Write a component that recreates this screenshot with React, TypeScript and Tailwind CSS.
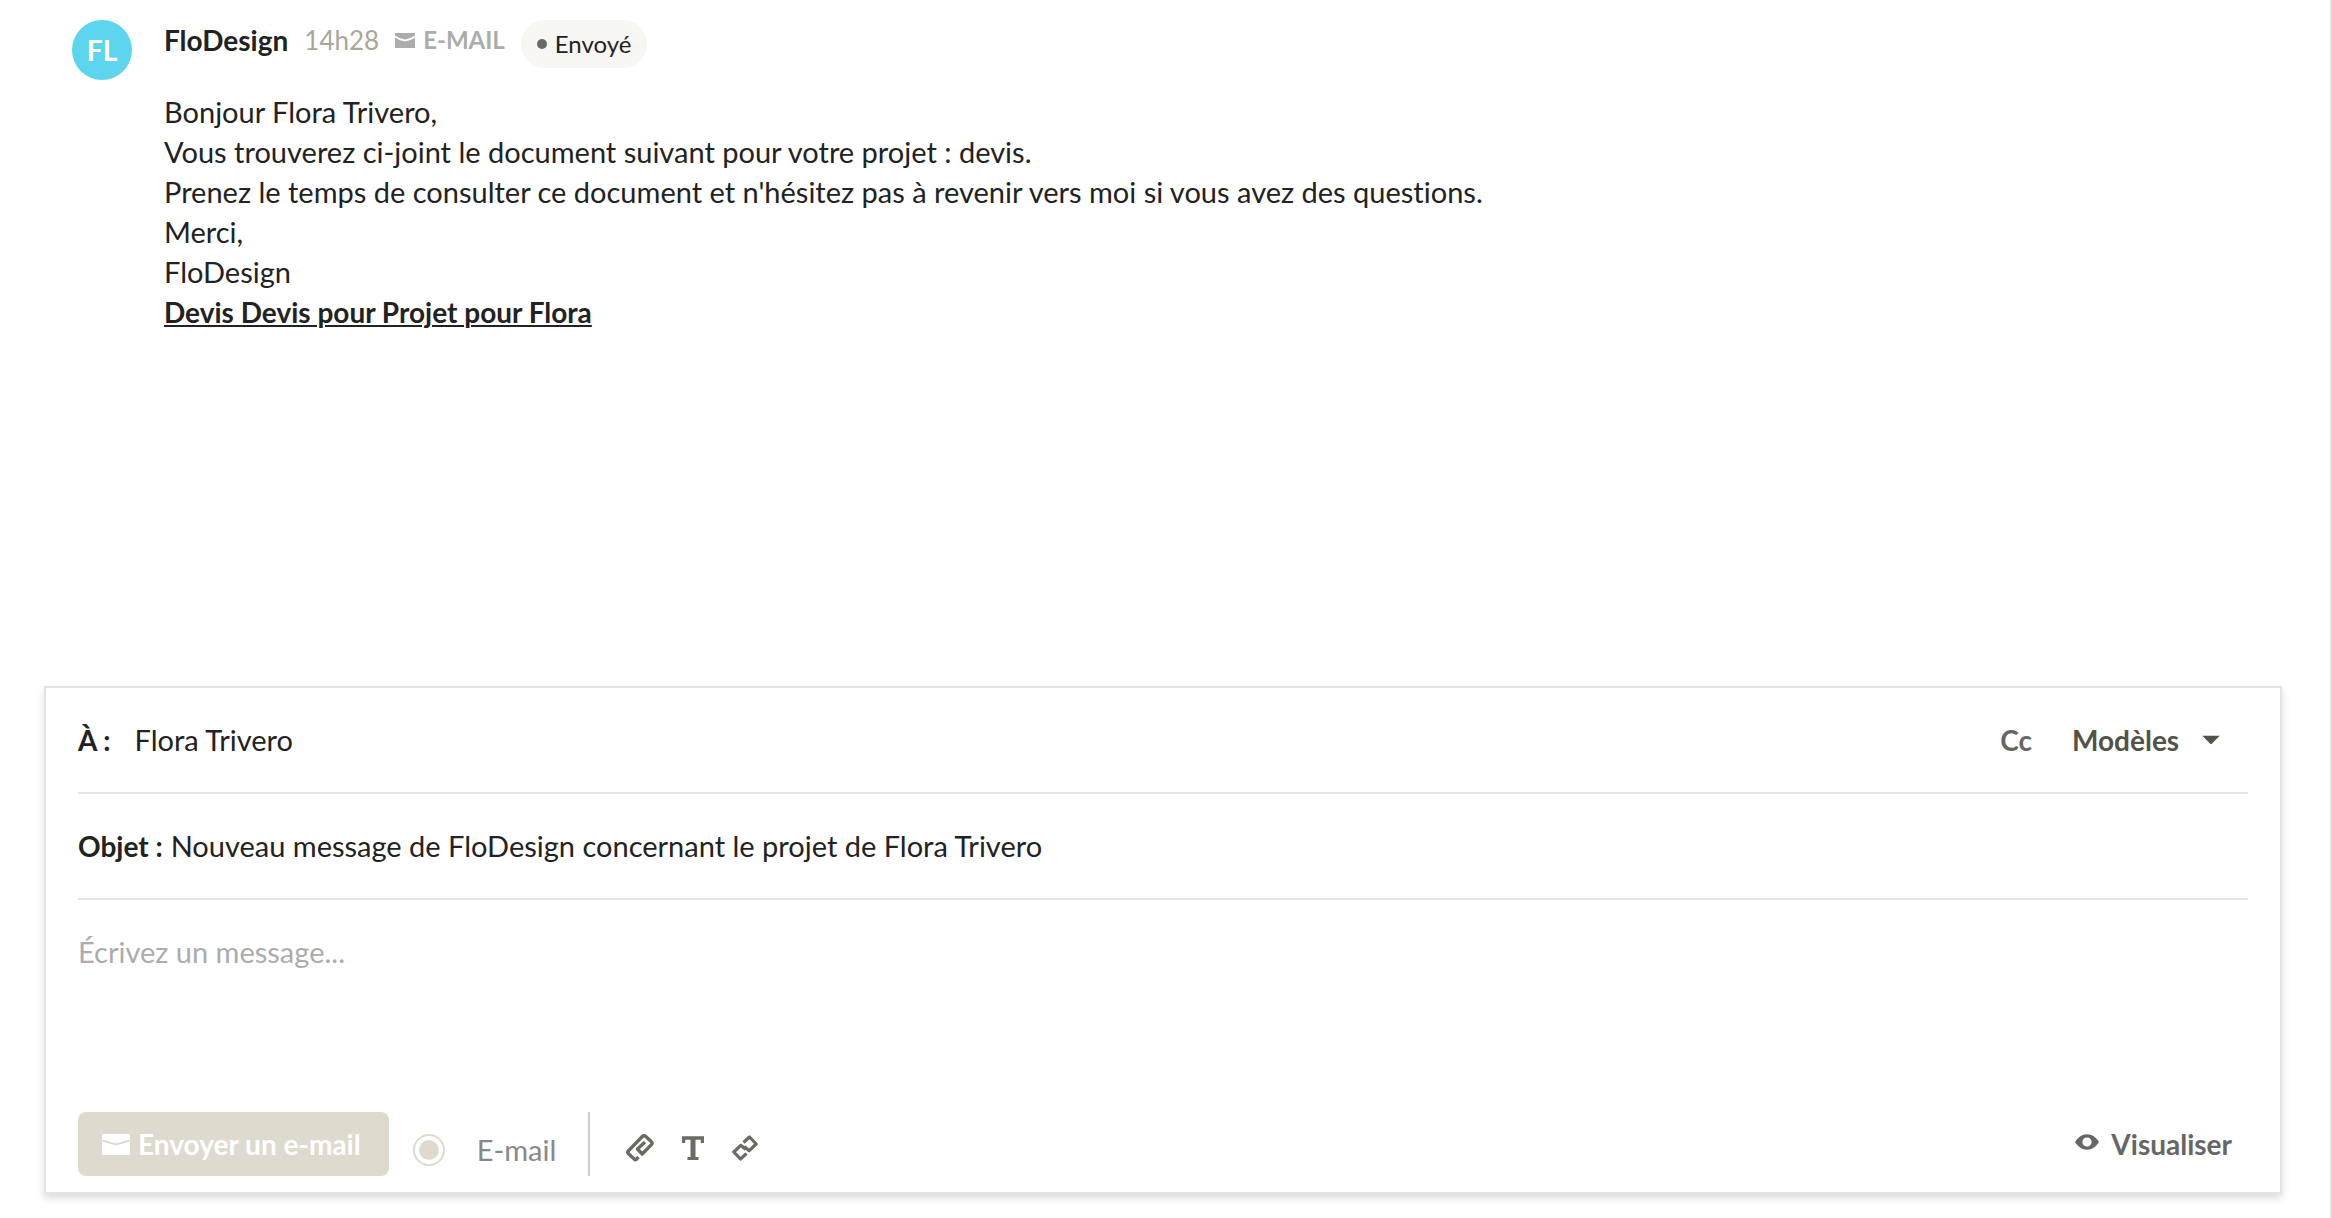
import React, { useState } from 'react';

const messageLines = [
  'Bonjour Flora Trivero,',
  'Vous trouverez ci-joint le document suivant pour votre projet : devis.',
  "Prenez le temps de consulter ce document et n'hésitez pas à revenir vers moi si vous avez des questions.",
  'Merci,',
  'FloDesign'
];

const EnvelopeIcon: React.FC<{ className?: string }> = ({ className }) => (
  <svg viewBox="0 0 28 21" className={className} fill="currentColor" aria-hidden="true">
    <path d="M1.2 0h25.6A1.2 1.2 0 0 1 28 1.2v4.3l-14 4-14-4V1.2A1.2 1.2 0 0 1 1.2 0z" />
    <path d="M0 7.5l14 4 14-4v12.3a1.2 1.2 0 0 1-1.2 1.2H1.2A1.2 1.2 0 0 1 0 19.8z" />
  </svg>
);

const SmallEnvelopeIcon: React.FC<{ className?: string }> = ({ className }) => (
  <svg viewBox="0 0 20 15" className={className} fill="currentColor" aria-hidden="true">
    <path d="M0 0h20v2.6Q15 6.2 10 6.6 5 6.2 0 2.6z" />
    <path d="M0 4.400q5 3.600 10 4 5-.4 10-4V15H0z" />
  </svg>
);

const ClipIcon: React.FC = () => (
  <svg viewBox="0 0 28 28" className="size-7" fill="none" stroke="currentColor" strokeWidth="3.4" strokeLinejoin="round" aria-hidden="true">
    <path d="M12.500 23l-2 2.200q-1 1-2 0L2.500 19.700q-1.500-1.500 0-3L16.300 2.500q1.700-1.700 3.500 0l5.400 5q1.700 1.600 0 3.400l-9 9.100-4.700-5 7.500-7" />
  </svg>
);

const TextIcon: React.FC = () => (
  <svg viewBox="0 0 22 24" className="h-6 w-[22px]" fill="none" stroke="currentColor" aria-hidden="true">
    <path d="M1.500 7V2h19v5" strokeWidth="3.500" />
    <path d="M11 2v20" strokeWidth="5" />
    <path d="M5.500 22.500h11" strokeWidth="3" />
  </svg>
);

const LinkIcon: React.FC = () => (
  <svg viewBox="0 0 26 26" className="size-[26px]" fill="none" stroke="currentColor" strokeWidth="3.2" strokeLinejoin="round" aria-hidden="true">
    <path d="M11.500 7.500l6-5.500 6.700 7-7 6.700-5-4.200" />
    <path d="M14.500 18.500l-6 5.500-6.700-7 7-6.700 5 4.200" />
  </svg>
);

const EyeIcon: React.FC = () => (
  <svg viewBox="0 0 24 16" className="mb-1 h-4 w-6" fill="currentColor" aria-hidden="true">
    <path fillRule="evenodd" d="M12 .3C17 .3 21 3.300 24 8 21 12.700 17 15.700 12 15.700S3 12.700 0 8C3 3.300 7 .3 12 .3zM12 3.400a4.600 4.600 0 1 0 0 9.200 4.600 4.600 0 0 0 0-9.200z" />
  </svg>
);

const Message: React.FC = () => (
  <article className="flex items-start gap-8 pl-[72px] pr-12 pt-5">
    <div className="flex size-[60px] shrink-0 items-center justify-center rounded-full bg-[#5dd5ee] text-[28px] font-bold text-white">
      FL
    </div>
    <div>
      <header className="flex items-start gap-4 leading-10">
        <span className="text-[28px] font-bold">FloDesign</span>
        <time className="text-[26px] leading-10 text-[#a9a797]">14h28</time>
        <span className="flex items-center gap-2 text-2xl leading-10 font-bold text-[#acacac]">
          <SmallEnvelopeIcon className="h-[15px] w-5" />
          E-MAIL
        </span>
        <span className="flex h-12 items-center gap-2 rounded-full bg-[#f7f6f2] px-4 text-2xl">
          <span className="size-2.5 rounded-full bg-[#6b6b66]" />
          Envoyé
        </span>
      </header>
      <div className="mt-6 text-[29px] leading-10">
        {messageLines.map((line) => (
          <p key={line}>{line}</p>
        ))}
        <a href="#devis" className="block text-[28px] font-bold underline decoration-2 underline-offset-2">
          Devis Devis pour Projet pour Flora
        </a>
      </div>
    </div>
  </article>
);

const Composer: React.FC = () => {
  const [subject, setSubject] = useState('Nouveau message de FloDesign concernant le projet de Flora Trivero');
  const [body, setBody] = useState('');

  return (
    <form
      onSubmit={(e) => e.preventDefault()}
      className="mt-auto mr-12 mb-6 ml-11 border-2 border-[#e4e4e4] bg-white px-8 pb-4 shadow-[0_4px_8px_rgba(0,0,0,0.15)]"
    >
      <div className="flex h-[106px] items-center border-b-2 border-[#e4e4e4]">
        <span className="text-[28px] font-bold">À :</span>
        <span className="ml-6 flex-1 text-[29px]">Flora Trivero</span>
        <button type="button" className="text-[28px] font-bold text-[#666]">Cc</button>
        <div className="relative mr-7 ml-10">
          <select
            aria-label="Modèles"
            className="w-[148px] appearance-none bg-transparent text-[28px] font-bold text-[#52524a]"
          >
            <option>Modèles</option>
          </select>
          <svg viewBox="0 0 18 9" className="pointer-events-none absolute top-1/2 right-0 h-[9px] w-[18px] -translate-y-1/2" fill="#52524a" aria-hidden="true">
            <path d="M0 0h18l-9 9z" />
          </svg>
        </div>
      </div>

      <div className="flex h-[106px] items-center gap-2 border-b-2 border-[#e4e4e4]">
        <label htmlFor="subject" className="text-[28px] font-bold">Objet :</label>
        <input
          id="subject"
          value={subject}
          onChange={(e) => setSubject(e.target.value)}
          className="flex-1 text-[29px] outline-none"
        />
      </div>

      <textarea
        aria-label="Message"
        value={body}
        onChange={(e) => setBody(e.target.value)}
        placeholder="Écrivez un message..."
        className="block h-[212px] w-full resize-none pt-8 text-[29px] leading-10 outline-none placeholder:text-[#acacac]"
      />

      <div className="flex h-16">
        <button type="submit" className="flex items-center gap-2 rounded-lg bg-[#dedace] pr-7 pl-6 text-[28px] font-bold text-white">
          <EnvelopeIcon className="h-[21px] w-7" />
          Envoyer un e-mail
        </button>
        <label className="ml-6 flex items-center gap-8 pt-3 text-[29px] text-[#888]">
          <input
            type="radio"
            name="channel"
            defaultChecked
            className="size-8 appearance-none rounded-full border-2 border-[#dedace] bg-[#dedace] bg-clip-content p-1"
          />
          E-mail
        </label>
        <div className="ml-8 flex items-center gap-7 border-l-2 border-[#ccc] pt-2 pl-9 text-[#6b6b63]">
          <button type="button" aria-label="Joindre un fichier"><ClipIcon /></button>
          <button type="button" aria-label="Mise en forme"><TextIcon /></button>
          <button type="button" aria-label="Insérer un lien"><LinkIcon /></button>
        </div>
        <button type="button" className="mr-4 ml-auto flex items-center gap-3 text-[28px] font-bold text-[#666]">
          <EyeIcon />
          Visualiser
        </button>
      </div>
    </form>
  );
};

const App: React.FC = () => (
  <main className="flex min-h-screen flex-col border-r-2 border-[#e4e4e4] bg-white font-['Lato',sans-serif] text-[#222] [font-variant-ligatures:none]">
    <Message />
    <Composer />
  </main>
);

export default App;
